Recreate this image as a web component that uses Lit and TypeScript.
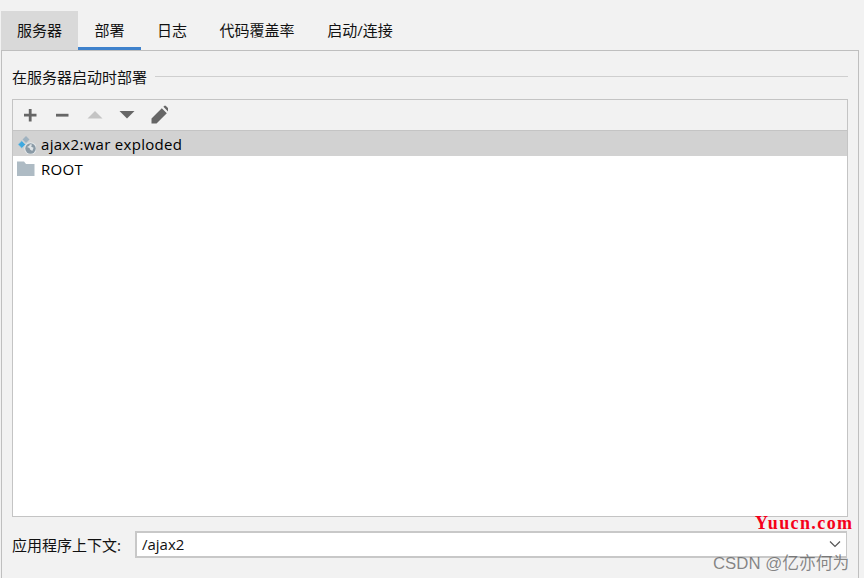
import { LitElement, html, css } from "lit";
import { customElement } from "lit/decorators.js";

@customElement("app-root")
export class AppRoot extends LitElement {
  static styles = css`
    :host { display: block; width: 864px; height: 578px; background: #f2f2f2; overflow: hidden; position: relative;
      font-family: "Open Sans", "Noto Sans CJK SC", sans-serif; font-size: 15px; color: #111; }
    .tabs { display: flex; padding: 11px 0 0 1px; height: 39px; }
    .tab { height: 39px; box-sizing: border-box; display: flex; align-items: center; justify-content: center; padding-bottom: 2px; }
    .t1 { width: 77px; background: #d9d9d9; }
    .t2 { width: 63px; border-bottom: 3px solid #3f82cc; padding-bottom: 0; }
    .t3 { width: 62px; }
    .t4 { width: 108px; }
    .t5 { width: 98px; }
    .panel { box-sizing: border-box; margin-left: 1px; width: 858px; height: 540px; border: solid #bfbfbf; border-width: 1px 1px 0 1px; padding: 15px 10px 0 10px; display: flex; flex-direction: column; }
    .group { display: flex; align-items: center; gap: 8px; height: 20px; }
    .group i { flex: 1; height: 1px; background: #cfcfcf; }
    .list { margin-top: 13px; height: 418px; box-sizing: border-box; border: 1px solid #c4c4c4; background: #fff; display: flex; flex-direction: column; }
    .bar { height: 31px; box-sizing: border-box; background: #f2f2f2; border-bottom: 1px solid #c4c4c4; display: flex; align-items: center; padding-left: 7px; gap: 12px; }
    .bar svg { display: block; width: 20px; height: 20px; }
    .row { height: 25px; display: flex; align-items: center; padding-left: 3px; gap: 5px; white-space: nowrap; letter-spacing: 0.3px; color: #000; }
    .row svg { display: block; width: 20px; height: 20px; flex: none; }
    .sel { background: #d2d2d2; }
    .ctx { display: flex; align-items: center; margin-top: 14px; }
    .ctx label { width: 123px; }
    .combo { box-sizing: border-box; width: 712px; height: 27px; background: #fff; border: 1px solid #c8c8c8; border-width: 2px 1px 2px 2px; display: flex; align-items: center; justify-content: space-between; padding: 0 4px 2px 5px; }
    .combo svg { display: block; width: 14px; height: 10px; }
    .wm1 { position: absolute; left: 755px; top: 513px; font: bold 18px "Liberation Serif", serif; letter-spacing: 1.4px; color: #f5001a; }
    .wm2 { position: absolute; left: 713px; top: 550px; font-size: 16.8px; color: rgba(90,90,90,0.72); white-space: nowrap; font-family: "Liberation Sans", "Noto Sans CJK SC", sans-serif; }
  `;

  render() {
    return html`
      <div class="tabs">
        <div class="tab t1">服务器</div>
        <div class="tab t2">部署</div>
        <div class="tab t3">日志</div>
        <div class="tab t4">代码覆盖率</div>
        <div class="tab t5">启动/连接</div>
      </div>
      <div class="panel">
        <div class="group"><span>在服务器启动时部署</span><i></i></div>
        <div class="list">
          <div class="bar">
            <svg viewBox="0 0 20 20"><path d="M8.800 4h2.800v4.800h4.900v2.800h-4.900v4.900H8.800v-4.900H4V8.800h4.800z" fill="#666"/></svg>
            <svg viewBox="0 0 20 20"><rect x="4" y="8.800" width="12.500" height="2.800" fill="#666"/></svg>
            <svg viewBox="0 0 20 20"><path d="M3.500 13.500 11 6l7.500 7.500z" fill="#c4c4c4"/></svg>
            <svg viewBox="0 0 20 20"><path d="M3.500 6h15L11 13.500z" fill="#666"/></svg>
            <svg viewBox="0 0 20 20"><path d="M3.500 18.500v-5L13.800 3.300l5 5L8.500 18.500zM15.400 1.800l.8-.8a1.200 1.200 0 0 1 1.700 0l3 3a1.200 1.200 0 0 1 0 1.700l-.8.800z" fill="#666"/></svg>
          </div>
          <div class="row sel">
            <svg viewBox="0 0 20 20">
              <path d="M10 2l3.500 3.500L10 9 6.500 5.500z" fill="#9fb2c0"/>
              <path d="M5.800 6.600 9.700 10.500 5.800 14.400 1.900 10.500z" fill="#3fa9e0" stroke="#d2d2d2" stroke-width="0.800"/>
              <circle cx="14.500" cy="14.500" r="6.200" fill="#e4e8ea"/>
              <circle cx="14.500" cy="14.500" r="5.200" fill="#8a9aa6"/>
              <path d="M11 13c1.500-.6 2.500-1.500 3-2.800l2 .3-.8 2.200 2.400 1-1.300 3.300-2.300-1.500-.5-1.500z" fill="#dfe4e7"/>
            </svg>
            <span>ajax2:war exploded</span>
          </div>
          <div class="row">
            <svg viewBox="0 0 20 20"><path d="M1 2.500h7l2 2.500h8.500v12H1z" fill="#aebbc4"/></svg>
            <span>ROOT</span>
          </div>
        </div>
        <div class="ctx">
          <label>应用程序上下文:</label>
          <div class="combo"><span>/ajax2</span>
            <svg viewBox="0 0 14 10"><path d="M2 2.500 7 7.500 12 2.500" fill="none" stroke="#555" stroke-width="1.200"/></svg>
          </div>
        </div>
      </div>
      <div class="wm1">Yuucn.com</div>
      <div class="wm2">CSDN @亿亦何为</div>
    `;
  }
}
